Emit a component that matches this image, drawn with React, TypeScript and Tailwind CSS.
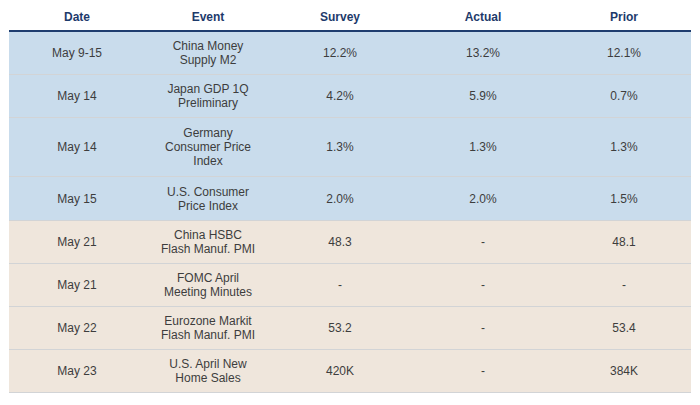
const rows = [
  { date: "May 9-15", event: ["China Money", "Supply M2"], survey: "12.2%", actual: "13.2%", prior: "12.1%", tone: "blue" },
  { date: "May 14", event: ["Japan GDP 1Q", "Preliminary"], survey: "4.2%", actual: "5.9%", prior: "0.7%", tone: "blue" },
  { date: "May 14", event: ["Germany", "Consumer Price", "Index"], survey: "1.3%", actual: "1.3%", prior: "1.3%", tone: "blue" },
  { date: "May 15", event: ["U.S. Consumer", "Price Index"], survey: "2.0%", actual: "2.0%", prior: "1.5%", tone: "blue" },
  { date: "May 21", event: ["China HSBC", "Flash Manuf. PMI"], survey: "48.3", actual: "-", prior: "48.1", tone: "tan" },
  { date: "May 21", event: ["FOMC April", "Meeting Minutes"], survey: "-", actual: "-", prior: "-", tone: "tan" },
  { date: "May 22", event: ["Eurozone Markit", "Flash Manuf. PMI"], survey: "53.2", actual: "-", prior: "53.4", tone: "tan" },
  { date: "May 23", event: ["U.S. April New", "Home Sales"], survey: "420K", actual: "-", prior: "384K", tone: "tan" },
];

const App = () => {
  return (
    <div className="w-[700px] h-[405px] bg-white font-['Liberation_Sans',Arial,sans-serif] pl-[9px] pr-[9px]">
      {/* Header */}
      <div className="flex h-[30px] items-center pt-[3px] text-[12px] font-bold text-[#1d3a6b]">
        <div className="w-[136px] text-center">Date</div>
        <div className="w-[126px] text-center">Event</div>
        <div className="w-[138px] text-center">Survey</div>
        <div className="w-[148px] text-center">Actual</div>
        <div className="w-[134px] text-center">Prior</div>
      </div>
      <div className="h-[2px] bg-[#1f3d6f]"></div>

      {/* Rows */}
      <div className="text-[12px] leading-[14px] text-[#3d3d3d]">
        {rows.map((r, i) => (
          <div
            key={i}
            className={`flex items-center border-b border-[#d2d4d6] ${r.event.length > 2 ? "h-[59px]" : i === 3 ? "h-[44px]" : "h-[43px]"} ${
              r.tone === "blue" ? "bg-[#c9dcec]" : "bg-[#efe6dc]"
            }`}
          >
            <div className="w-[136px] text-center">{r.date}</div>
            <div className="w-[126px] text-center">
              {r.event.map((l, j) => (
                <div key={j}>{l}</div>
              ))}
            </div>
            <div className="w-[138px] text-center">{r.survey}</div>
            <div className="w-[148px] text-center">{r.actual}</div>
            <div className="w-[134px] text-center">{r.prior}</div>
          </div>
        ))}
      </div>
    </div>
  );
};

export default App;
